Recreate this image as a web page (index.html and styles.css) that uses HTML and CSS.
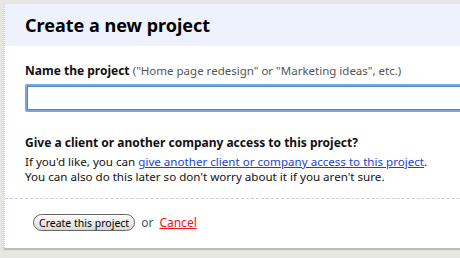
FILE: index.html
```html
<!DOCTYPE html>
<html lang="en">
<head>
    <meta charset="UTF-8">
    <title>Create a new project</title>
    <link rel="stylesheet" href="styles.css">
</head>
<body>
    <div class="panel">
        <div class="panel-header">
            <h1>Create a new project</h1>
        </div>
        <div class="panel-body">
            <label class="field-label" for="project-name">Name the project <span class="hint">("Home page redesign" or "Marketing ideas", etc.)</span></label>
            <input type="text" id="project-name" class="name-input">

            <h3>Give a client or another company access to this project?</h3>
            <p class="note">If you'd like, you can <a href="#">give another client or company access to this project</a>.<br>
            You can also do this later so don't worry about it if you aren't sure.</p>
        </div>
        <div class="panel-footer">
            <button class="submit">Create this project</button>
            <span class="or">or</span>
            <a href="#" class="cancel">Cancel</a>
        </div>
    </div>
</body>
</html>
```

FILE: styles.css
```css
body {
    margin: 0;
    padding: 4px 0 10px 4px;
    background-color: #e6e6e2;
    font-family: 'Noto Sans', 'DejaVu Sans', sans-serif;
    font-size: 12px;
    color: #111;
    overflow: hidden;
}
.panel {
    width: 520px;
    background: #ffffff;
    border-left: 1px dotted #d4d4d0;
    box-shadow: 0 2px 1px rgba(0, 0, 0, 0.18);
}
.panel-header {
    background-color: #eef2fd;
    height: 42px;
    padding: 0 20px;
}
.panel-header h1 {
    margin: 0;
    font-size: 18px;
    line-height: 43px;
    color: #000;
}
.panel-body {
    padding: 17px 0 14px 20px;
    border-bottom: 1px dashed #cfcfcf;
}
.field-label {
    display: block;
    font-weight: bold;
    font-size: 12px;
    line-height: 16px;
    margin-bottom: 5px;
}
.hint {
    font-weight: normal;
    color: #555;
    font-size: 11.5px;
}
.name-input {
    display: block;
    box-sizing: border-box;
    width: 100%;
    height: 28px;
    margin: 0;
    border: 3px solid #7aa6dd;
    border-radius: 2px;
    outline: 1px solid #4f86cc;
    outline-offset: -3px;
    background: #fff;
}
.panel-body h3 {
    margin: 23px 0 3px;
    font-size: 12px;
    line-height: 16px;
}
.note {
    margin: 0;
    line-height: 15px;
    font-size: 11.6px;
}
.note a {
    color: #1a3fd6;
}
.panel-footer {
    padding: 15px 0 17px 28px;
    display: flex;
    align-items: center;
    gap: 6px;
}
.submit {
    font-family: inherit;
    font-size: 10.5px;
    height: 17px;
    padding: 0 5px;
    border: 1px solid #666;
    border-radius: 9px;
    background: linear-gradient(#ffffff, #d8d8d8);
    color: #000;
}
.or {
    color: #555;
    font-size: 12px;
}
.cancel {
    color: #e8141e;
    font-size: 12px;
}
```
